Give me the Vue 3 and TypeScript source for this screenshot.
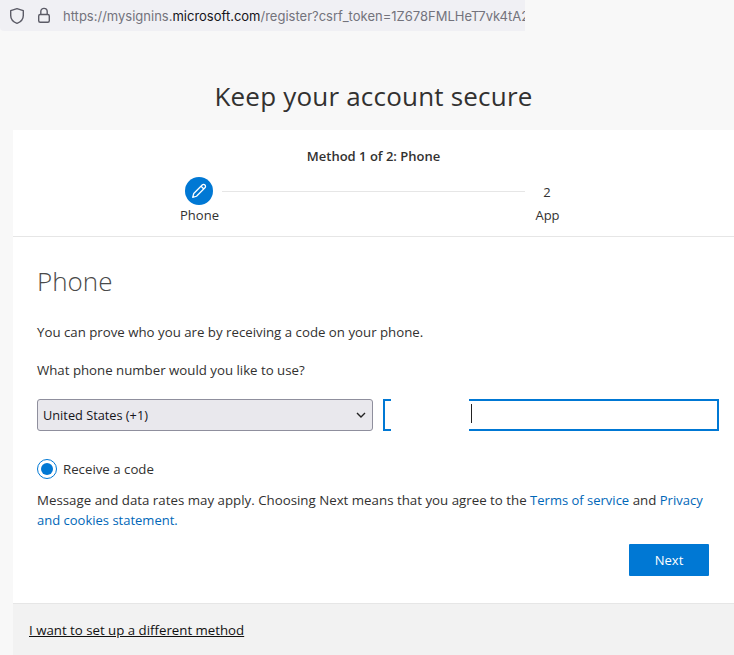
<script setup lang="ts">
const url = { a: 'https://mysignins.', b: 'microsoft.com', c: '/register?csrf_token=1Z678FMLHeT7vk4tA2' }
</script>

<template>
  <div class="page">
    <div class="urlbar">
      <svg class="shield" width="16" height="18" viewBox="0 0 16 18" fill="none">
        <path d="M8 1.600 14.300 3.600V8.500C14.300 12.400 11.600 15 8 16.400 4.400 15 1.700 12.400 1.700 8.500V3.600Z" stroke="#5b5b66" stroke-width="1.400" stroke-linejoin="round" />
      </svg>
      <svg class="lock" width="14" height="17" viewBox="0 0 14 17" fill="none">
        <rect x="1.700" y="7.500" width="10.600" height="7.800" rx="1.500" stroke="#5b5b66" stroke-width="1.400" />
        <path d="M3.800 7.500V4.600a3.200 3.200 0 0 1 6.400 0V7.500" stroke="#5b5b66" stroke-width="1.400" />
      </svg>
      <div class="url">{{ url.a }}<b>{{ url.b }}</b>{{ url.c }}</div>
    </div>

    <h1 class="title">Keep your account secure</h1>

    <main class="card">
      <header class="steps">
        <div class="method">Method 1 of 2: Phone</div>
        <div class="track">
          <div class="step">
            <span class="circle">
              <svg width="16" height="16" viewBox="0 0 14 14" fill="none">
                <path d="M1.500 12.500 2.400 9.200 9.800 1.800a1.400 1.400 0 0 1 2.400 2.400L4.800 11.600Z" stroke="#fff" stroke-width="1.100" stroke-linejoin="round" />
                <path d="M8.800 2.800 11.200 5.200" stroke="#fff" stroke-width="1.100" />
              </svg>
            </span>
            <span class="label">Phone</span>
          </div>
          <div class="line"></div>
          <div class="step second">
            <span class="num">2</span>
            <span class="label">App</span>
          </div>
        </div>
      </header>

      <section class="body">
        <h2 class="heading">Phone</h2>
        <p class="intro">You can prove who you are by receiving a code on your phone.</p>
        <p class="question">What phone number would you like to use?</p>
        <div class="inputs">
          <div class="select">
            <span>United States (+1)</span>
            <svg width="10" height="6" viewBox="0 0 10 6" fill="none">
              <path d="M1 1 5 5 9 1" stroke="#222" stroke-width="1.400" />
            </svg>
          </div>
          <div class="phone">
            <div class="redact"><span class="caret"></span></div>
          </div>
        </div>
        <div class="radio-row">
          <span class="radio"><span class="dot"></span></span>
          <span class="radio-label">Receive a code</span>
        </div>
        <p class="terms">
          Message and data rates may apply. Choosing Next means that you agree to the
          <a class="link">Terms of service</a> and <a class="link">Privacy and cookies statement.</a>
        </p>
        <div class="actions"><button class="next">Next</button></div>
      </section>

      <footer class="foot"><a class="other">I want to set up a different method</a></footer>
    </main>
  </div>
</template>

<style>
html, body { margin: 0; background: #f8f8f8; }
</style>

<style scoped>
.page {
  width: 734px;
  height: 655px;
  overflow: hidden;
  background: #f8f8f8;
  font-family: "Open Sans", "Noto Sans", sans-serif;
  color: #323130;
  font-size: 13.25px;
}
.urlbar {
  width: 525px;
  height: 31px;
  box-sizing: border-box;
  background: #f0f0f4;
  border-radius: 0 0 0 4px;
  display: flex;
  align-items: center;
  padding-left: 9px;
  overflow: hidden;
}
.shield, .lock { flex: none; }
.lock { margin-left: 12px; }
.url {
  margin-left: 12px;
  flex: none;
  font-family: Inter, "Noto Sans", sans-serif;
  font-size: 13px;
  color: #73737c;
  white-space: nowrap;
}
.url b { font-weight: 400; color: #15141a; }
.title {
  margin: 45px 0 0;
  height: 54px;
  text-align: center;
  font-size: 26px;
  font-weight: 400;
  line-height: 40px;
  color: #323130;
  box-sizing: border-box;
  padding-left: 13px;
  letter-spacing: 0.2px;
}
.card {
  margin-left: 13px;
  width: 721px;
  background: #fff;
  height: 525px;
  display: flex;
  flex-direction: column;
}
.steps {
  height: 106px;
  flex: none;
  border-bottom: 1px solid #e6e6e6;
}
.method {
  padding-top: 17px;
  text-align: center;
  font-weight: 600;
  font-size: 13px;
  line-height: 18px;
}
.track {
  display: flex;
  align-items: flex-start;
  margin-top: 12px;
  padding-left: 166px;
}
.step {
  width: 40px;
  display: flex;
  flex-direction: column;
  align-items: center;
}
.second { margin-left: 2px; }
.circle {
  width: 28px;
  height: 28px;
  border-radius: 50%;
  background: #0078d4;
  display: flex;
  align-items: center;
  justify-content: center;
}
.num {
  height: 28px;
  line-height: 30px;
  font-size: 13px;
}
.label {
  margin-top: 1px;
  padding-left: 1px;
  line-height: 18px;
  font-size: 13px;
  white-space: nowrap;
}
.line {
  width: 303px;
  height: 1px;
  margin: 14px 0 0 3px;
  background: #e6e6e6;
}
.body {
  flex: 1;
  padding: 0 24px;
  position: relative;
}
.heading {
  margin: 26px 0 0;
  font-size: 26px;
  font-weight: 300;
  line-height: 36px;
  color: #4a4a4a;
}
.intro { margin: 23px 0 0; line-height: 20px; }
.question { margin: 18px 0 0; line-height: 20px; }
.inputs {
  display: flex;
  margin-top: 19px;
  gap: 10px;
}
.select {
  width: 336px;
  height: 32px;
  flex: none;
  box-sizing: border-box;
  background: #e9e8ed;
  border: 1px solid #8f8f9d;
  border-radius: 3px;
  display: flex;
  align-items: center;
  justify-content: space-between;
  padding: 0 6px 0 5px;
  font-size: 12.750px;
  color: #15141a;
}
.phone {
  width: 336px;
  height: 32px;
  flex: none;
  box-sizing: border-box;
  border: 2px solid #0078d4;
  position: relative;
}
.redact {
  position: absolute;
  left: 6px;
  top: -2px;
  width: 78px;
  height: 32px;
  background: #fff;
}
.caret {
  position: absolute;
  right: -3px;
  top: 5px;
  width: 1px;
  height: 19px;
  background: #222;
}
.radio-row {
  display: flex;
  align-items: center;
  margin-top: 28px;
  gap: 6px;
}
.radio {
  width: 20px;
  height: 20px;
  box-sizing: border-box;
  border: 1px solid #0078d4;
  border-radius: 50%;
  display: flex;
  align-items: center;
  justify-content: center;
}
.dot {
  width: 12px;
  height: 12px;
  border-radius: 50%;
  background: #0078d4;
}
.terms {
  margin: 12px 0 0;
  line-height: 19.500px;
  width: 672px;
  font-size: 13.300px;
}
.link { color: #0067b8; font-size: 13px; }
.actions {
  display: flex;
  justify-content: flex-end;
  margin-top: 14px;
  padding-right: 1px;
}
.next {
  width: 80px;
  height: 32px;
  border: 0;
  border-radius: 1px;
  background: #0078d4;
  color: #fff;
  font: inherit;
  font-size: 13px;
}
.foot {
  flex: none;
  height: 52px;
  box-sizing: border-box;
  background: #f2f2f2;
  border-top: 1px solid #e6e6e6;
  padding: 16px 16px 0;
  line-height: 20px;
}
.other { color: #111; text-decoration: underline; }
</style>
